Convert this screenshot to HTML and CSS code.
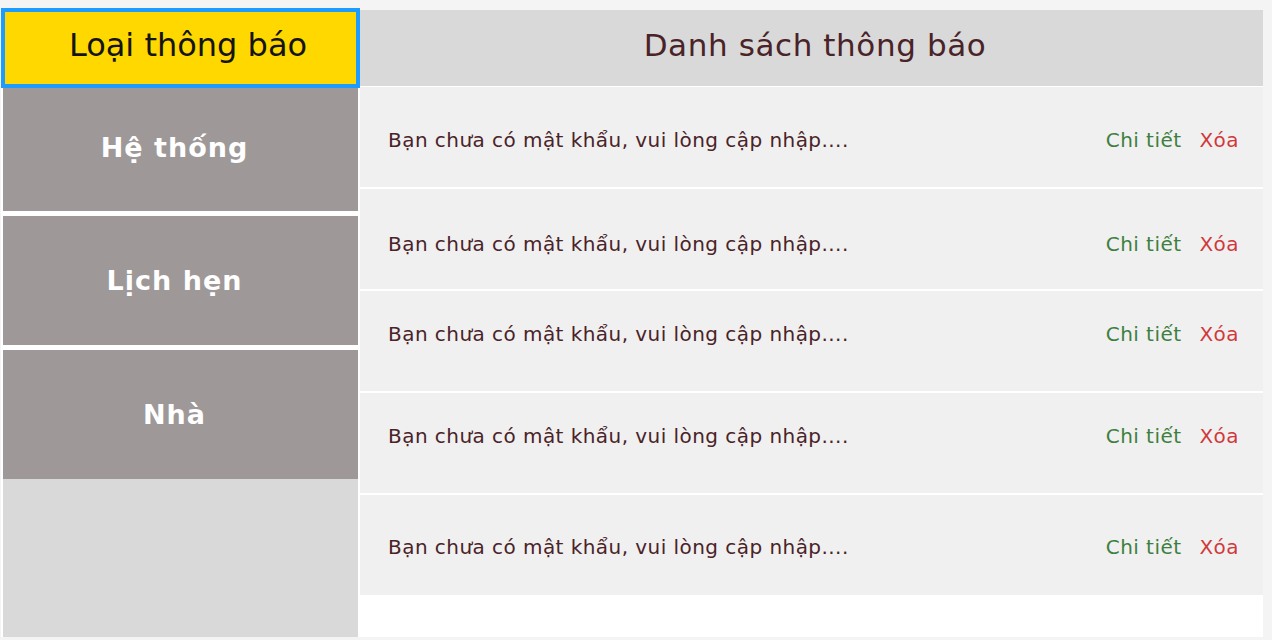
FILE: index.html
```html
<!DOCTYPE html>
<html lang="vi">
<head>
<meta charset="utf-8">
<title>Thông báo</title>
<link rel="stylesheet" href="styles.css">
</head>
<body>
<div class="app">
  <aside class="sidebar">
    <div class="sidebar__title">Loại thông báo</div>
    <nav class="sidebar__list">
      <div class="cat cat--first">Hệ thống</div>
      <div class="cat">Lịch hẹn</div>
      <div class="cat">Nhà</div>
      <div class="sidebar__fill"></div>
    </nav>
  </aside>
  <main class="main">
    <header class="main__head">Danh sách thông báo</header>
    <ul class="list">
      <li class="item item--n1">
        <span class="item__text">Bạn chưa có mật khẩu, vui lòng cập nhập....</span>
        <span class="item__actions"><a class="link link--detail">Chi tiết</a><a class="link link--delete">Xóa</a></span>
      </li>
      <li class="item item--n2">
        <span class="item__text">Bạn chưa có mật khẩu, vui lòng cập nhập....</span>
        <span class="item__actions"><a class="link link--detail">Chi tiết</a><a class="link link--delete">Xóa</a></span>
      </li>
      <li class="item item--n3">
        <span class="item__text">Bạn chưa có mật khẩu, vui lòng cập nhập....</span>
        <span class="item__actions"><a class="link link--detail">Chi tiết</a><a class="link link--delete">Xóa</a></span>
      </li>
      <li class="item item--n4">
        <span class="item__text">Bạn chưa có mật khẩu, vui lòng cập nhập....</span>
        <span class="item__actions"><a class="link link--detail">Chi tiết</a><a class="link link--delete">Xóa</a></span>
      </li>
      <li class="item item--n5">
        <span class="item__text">Bạn chưa có mật khẩu, vui lòng cập nhập....</span>
        <span class="item__actions"><a class="link link--detail">Chi tiết</a><a class="link link--delete">Xóa</a></span>
      </li>
    </ul>
  </main>
</div>
</body>
</html>
```

FILE: styles.css
```css
html, body {
  margin: 0;
  height: 100%;
}

body {
  background: #f4f4f4;
  font-family: "DejaVu Sans", "Noto Sans", sans-serif;
  overflow: hidden;
}

.app {
  display: flex;
  align-items: flex-start;
  padding: 8px 0 0 1px;
  height: 640px;
  box-sizing: border-box;
}

/* ---------- sidebar ---------- */
.sidebar {
  width: 359px;
  height: 629px;
  display: flex;
  flex-direction: column;
}

.sidebar__title {
  height: 80px;
  box-sizing: border-box;
  border: 4px solid #1e9bff;
  background: #ffd800;
  display: flex;
  align-items: center;
  justify-content: center;
  padding: 0 0 6px 15px;
  font-size: 32px;
  color: #141414;
}

.sidebar__list {
  flex: 1;
  display: flex;
  flex-direction: column;
  background: #fff;
  padding: 0 2px;
}

.cat {
  height: 129px;
  flex: none;
  background: #9e9898;
  color: #fff;
  font-size: 27px;
  font-weight: bold;
  letter-spacing: 1px;
  display: flex;
  align-items: center;
  justify-content: center;
  padding-right: 12px;
  margin-top: 5px;
}

.cat--first {
  height: 123px;
  margin-top: 0;
  padding-bottom: 5px;
  box-sizing: border-box;
}

.sidebar__fill {
  flex: 1;
  background: #d9d9d9;
}

/* ---------- main ---------- */
.main {
  width: 903px;
  height: 627px;
  margin-top: 2px;
  background: #fff;
  display: flex;
  flex-direction: column;
}

.main__head {
  height: 76px;
  flex: none;
  box-sizing: border-box;
  background: #d9d9d9;
  display: flex;
  align-items: center;
  justify-content: center;
  padding: 0 0 6px 7px;
  font-size: 31px;
  letter-spacing: 0.6px;
  color: #4a2328;
}

.list {
  list-style: none;
  margin: 0;
  padding: 1px 0 0;
  display: flex;
  flex-direction: column;
  gap: 2px;
}

.item {
  height: 100px;
  box-sizing: border-box;
  background: #f0f0f0;
  display: flex;
  align-items: center;
  padding: 0 24px 0 28px;
  font-size: 20px;
  letter-spacing: 0.45px;
}

.item--n1 { padding-top: 6px; }
.item--n2 { padding-top: 10px; }
.item--n3 { padding-bottom: 14px; }
.item--n4 { padding-bottom: 14px; }
.item--n5 { padding-top: 4px; }

.item__text {
  flex: 1;
  color: #4a2328;
}

.item__actions {
  display: flex;
  gap: 18px;
}

.link {
  cursor: pointer;
}

.link--detail {
  color: #3d7f40;
}

.link--delete {
  color: #d0393b;
}
```
